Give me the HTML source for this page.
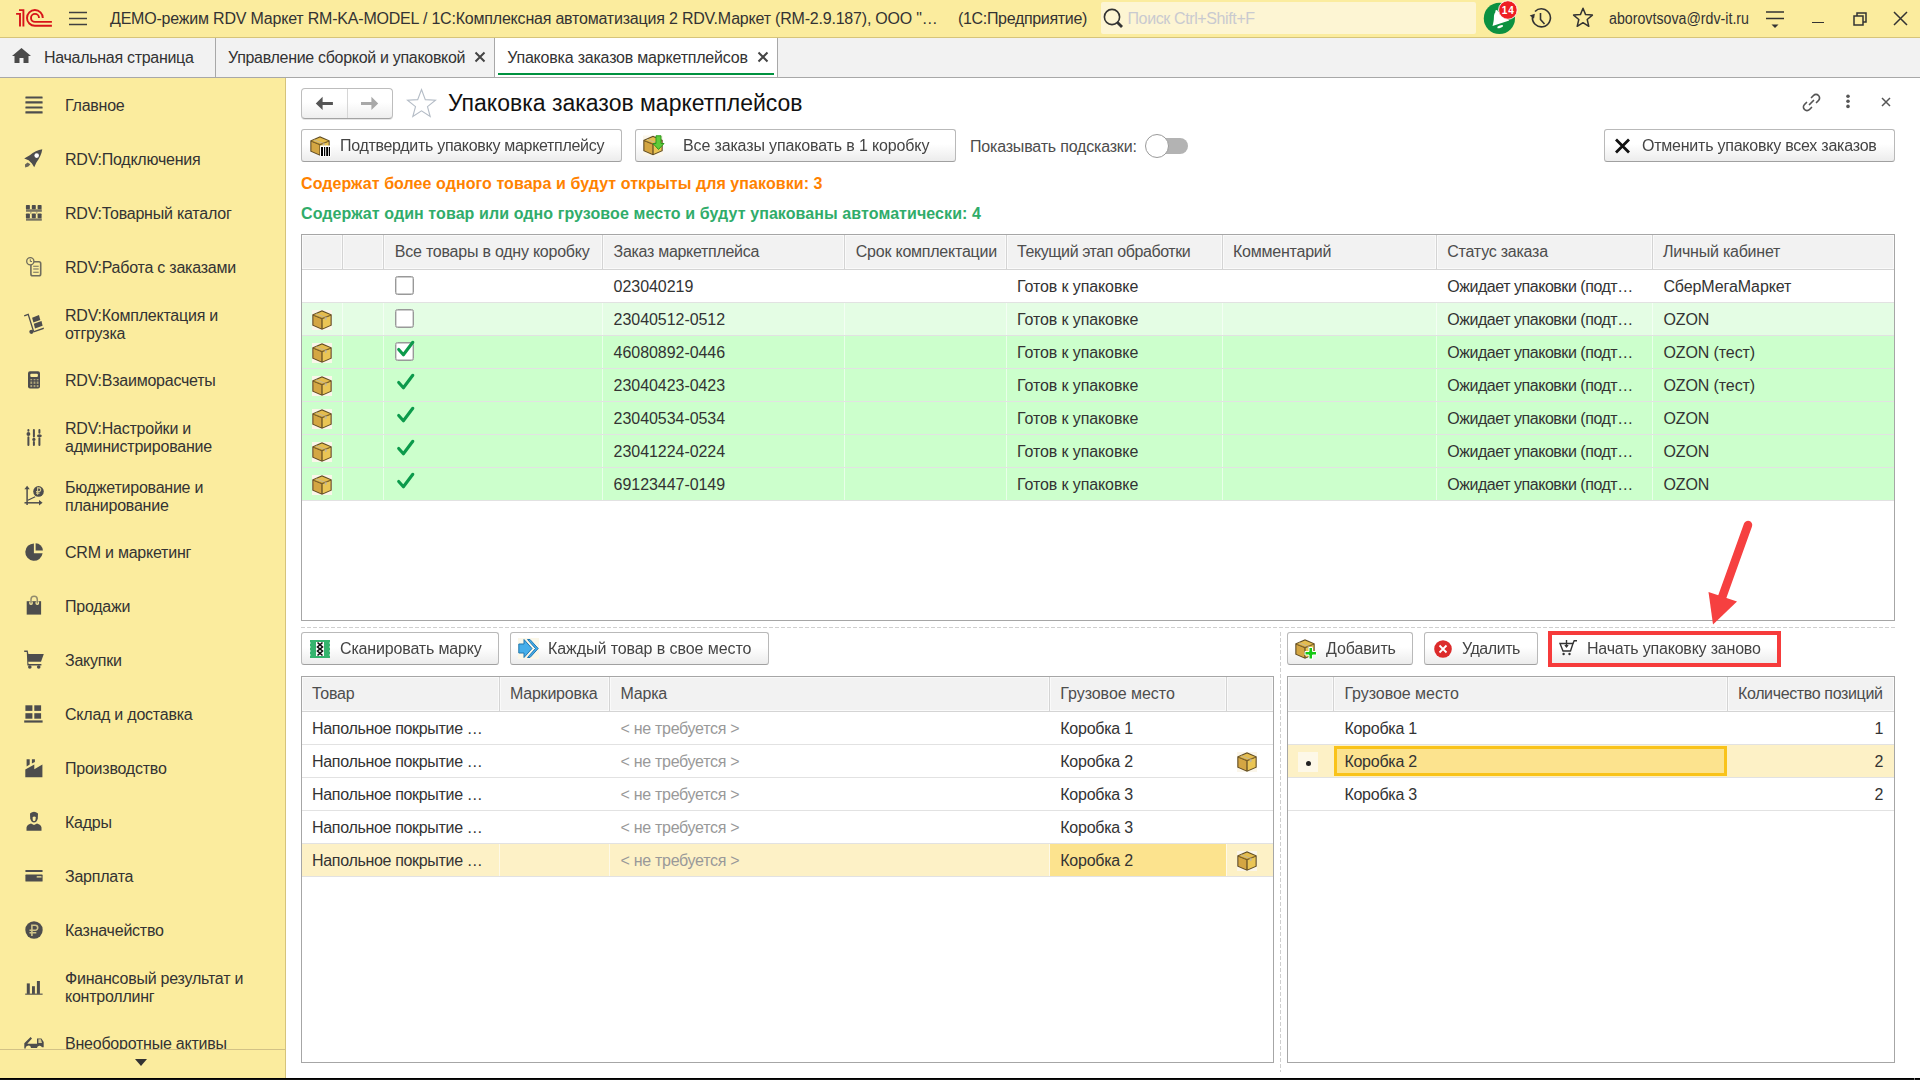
<!DOCTYPE html>
<html><head><meta charset="utf-8"><style>
html,body{margin:0;padding:0;width:1920px;height:1080px;overflow:hidden;background:#fff;}
body{position:relative;font-family:"Liberation Sans",sans-serif;}
.t{position:absolute;white-space:nowrap;line-height:18px;}
.r{position:absolute;}
svg.r{overflow:visible;}
</style></head><body>
<div class="r" style="left:0px;top:0px;width:1920px;height:37px;background:#FBEC9E"></div>
<div class="r" style="left:0px;top:37px;width:1920px;height:1px;background:#D6C47A"></div>
<svg class="r" style="left:12px;top:5px" width="46" height="26" viewBox="0 0 46 26"><g fill="none" stroke="#D7141A" stroke-width="1.9">
<path d="M4.1 8.9 H8 V21.6"/><path d="M7 5.1 H11.4 V21.6"/>
<path d="M30.8 12.9 A7.9 7.9 0 1 0 22.9 20.8 H39.9"/>
<path d="M27 12.9 A4 4 0 1 0 23 16.9 H39.9"/>
</g></svg>
<svg class="r" style="left:69px;top:11px" width="19" height="15" viewBox="0 0 19 15"><g stroke="#404040" stroke-width="1.6"><path d="M0 1.5H18M0 7.5H18M0 13.5H18"/></g></svg>
<div class="t" style="left:110px;top:10px;color:#333;font-size:16px;font-weight:normal;letter-spacing:-0.202px;">ДЕМО-режим RDV Маркет RM-KA-MODEL / 1С:Комплексная автоматизация 2 RDV.Маркет (RM-2.9.187), ООО "…</div>
<div class="t" style="left:958px;top:10px;color:#333;font-size:16px;font-weight:normal;letter-spacing:-0.323px;">(1С:Предприятие)</div>
<div class="r" style="left:1101px;top:2px;width:375px;height:32px;background:#FDF5D3;border-radius:2px"></div>
<svg class="r" style="left:1103px;top:8px" width="22" height="22" viewBox="0 0 22 22"><circle cx="9" cy="9" r="7.6" fill="none" stroke="#333" stroke-width="1.6"/><path d="M14.5 14.5 L19 19" stroke="#333" stroke-width="2.8"/></svg>
<div class="t" style="left:1127.5px;top:10px;color:#C9CAD0;font-size:16px;font-weight:normal;letter-spacing:-0.383px;">Поиск Ctrl+Shift+F</div>
<svg class="r" style="left:1480px;top:0px" width="42" height="36" viewBox="0 0 42 36"><circle cx="19.4" cy="18.4" r="15.6" fill="#0B9141"/>
<path d="M16.3 9.9 C17.4 9.9 18 10.7 18 11.7 C20.6 12.4 22.6 14.2 24.2 16.6 L29.3 20.4 L12.5 25.9 C13.4 23 13.9 20.3 13.9 17.6 C13.9 15 14.5 13 15.5 11.9 C15.1 10.9 15.5 9.9 16.3 9.9 Z" fill="#fff"/>
<ellipse cx="20.2" cy="26.6" rx="3.1" ry="1.25" transform="rotate(-20 20.2 26.6)" fill="#fff"/>
<circle cx="27.9" cy="10" r="9.3" fill="#EE1D23" stroke="#fff" stroke-width="0.9"/>
<text x="28.3" y="13.6" style="font-family:'Liberation Sans',sans-serif;font-weight:bold" font-size="10" letter-spacing="1" fill="#fff" text-anchor="middle">14</text></svg>
<svg class="r" style="left:1529px;top:6px" width="26" height="24" viewBox="0 0 26 24"><g fill="none" stroke="#333" stroke-width="1.6"><path d="M3.5 10.5 A9 9 0 1 0 6 5.5"/><path d="M11.5 7 V13.5 L15.5 18"/></g>
<path d="M1 8.5 L6.5 8.5 L4 13 Z" fill="#333" transform="rotate(-20 4 10)"/></svg>
<svg class="r" style="left:1572px;top:7px" width="22" height="22" viewBox="0 0 22 22"><path d="M11 1.3 L13.6 7.6 L20.4 8.1 L15.2 12.5 L16.8 19.3 L11 15.7 L5.2 19.3 L6.8 12.5 L1.6 8.1 L8.4 7.6 Z" fill="none" stroke="#333" stroke-width="1.5" stroke-linejoin="round"/></svg>
<div class="t" style="left:1609.3px;top:10px;color:#333;font-size:16px;font-weight:normal;letter-spacing:0.000px;transform:scaleX(0.888);transform-origin:0 0;">aborovtsova@rdv-it.ru</div>
<svg class="r" style="left:1765px;top:9px" width="21" height="20" viewBox="0 0 21 20"><g stroke="#333" stroke-width="1.6"><path d="M1 3H19M1 9.5H19"/></g><path d="M6.5 15.5H13.5L10 19Z" fill="#333"/></svg>
<div class="r" style="left:1812px;top:22px;width:12px;height:1.3px;background:#333"></div>
<svg class="r" style="left:1852px;top:11px" width="16" height="16" viewBox="0 0 16 16"><g fill="none" stroke="#333" stroke-width="1.5"><rect x="2" y="5" width="9" height="9"/><path d="M5 5V2H14V11H11"/></g></svg>
<svg class="r" style="left:1892px;top:10px" width="18" height="18" viewBox="0 0 18 18"><path d="M2 2L15 15M15 2L2 15" stroke="#333" stroke-width="1.5"/></svg>
<div class="r" style="left:0px;top:38px;width:1920px;height:39px;background:#F2F2F2"></div>
<div class="r" style="left:0px;top:77px;width:1920px;height:1px;background:#A8A8A8"></div>
<div class="r" style="left:215px;top:38px;width:1px;height:39px;background:#A8A8A8"></div>
<div class="r" style="left:494px;top:38px;width:1px;height:39px;background:#A8A8A8"></div>
<div class="r" style="left:495px;top:38px;width:282px;height:39px;background:#fff"></div>
<div class="r" style="left:777px;top:38px;width:1px;height:39px;background:#A8A8A8"></div>
<div class="r" style="left:498px;top:73px;width:276px;height:2px;background:#00923F"></div>
<svg class="r" style="left:11px;top:47px" width="21" height="17" viewBox="0 0 21 17"><path d="M10.5 1 L20 9 L17.5 9 L17.5 16 L12.5 16 L12.5 11 L8.5 11 L8.5 16 L3.5 16 L3.5 9 L1 9 Z" fill="#4A4A4A"/></svg>
<div class="t" style="left:44px;top:49px;color:#333;font-size:16px;font-weight:normal;letter-spacing:-0.290px;">Начальная страница</div>
<div class="t" style="left:228px;top:49px;color:#333;font-size:16px;font-weight:normal;letter-spacing:-0.305px;">Управление сборкой и упаковкой</div>
<svg class="r" style="left:474px;top:51px" width="12" height="12" viewBox="0 0 12 12"><path d="M1.5 1.5L10.5 10.5M10.5 1.5L1.5 10.5" stroke="#444" stroke-width="2"/></svg>
<div class="t" style="left:507.2px;top:49px;color:#333;font-size:16px;font-weight:normal;letter-spacing:-0.203px;">Упаковка заказов маркетплейсов</div>
<svg class="r" style="left:757px;top:51px" width="12" height="12" viewBox="0 0 12 12"><path d="M1.5 1.5L10.5 10.5M10.5 1.5L1.5 10.5" stroke="#444" stroke-width="2"/></svg>
<div class="r" style="left:0px;top:78px;width:285px;height:1000px;background:#FBEC9E"></div>
<div class="r" style="left:285px;top:78px;width:1px;height:1000px;background:#D5C37C"></div>
<div class="t" style="left:65px;top:97px;color:#333;font-size:16px;font-weight:normal;letter-spacing:-0.230px;">Главное</div>
<div class="t" style="left:65px;top:151px;color:#333;font-size:16px;font-weight:normal;letter-spacing:-0.230px;">RDV:Подключения</div>
<div class="t" style="left:65px;top:205px;color:#333;font-size:16px;font-weight:normal;letter-spacing:-0.230px;">RDV:Товарный каталог</div>
<div class="t" style="left:65px;top:259px;color:#333;font-size:16px;font-weight:normal;letter-spacing:-0.230px;">RDV:Работа с заказами</div>
<div class="t" style="left:65px;top:307px;color:#333;font-size:16px;font-weight:normal;letter-spacing:-0.230px;">RDV:Комплектация и</div>
<div class="t" style="left:65px;top:325px;color:#333;font-size:16px;font-weight:normal;letter-spacing:-0.230px;">отгрузка</div>
<div class="t" style="left:65px;top:372px;color:#333;font-size:16px;font-weight:normal;letter-spacing:-0.230px;">RDV:Взаиморасчеты</div>
<div class="t" style="left:65px;top:420px;color:#333;font-size:16px;font-weight:normal;letter-spacing:-0.230px;">RDV:Настройки и</div>
<div class="t" style="left:65px;top:438px;color:#333;font-size:16px;font-weight:normal;letter-spacing:-0.230px;">администрирование</div>
<div class="t" style="left:65px;top:479px;color:#333;font-size:16px;font-weight:normal;letter-spacing:-0.230px;">Бюджетирование и</div>
<div class="t" style="left:65px;top:497px;color:#333;font-size:16px;font-weight:normal;letter-spacing:-0.230px;">планирование</div>
<div class="t" style="left:65px;top:544px;color:#333;font-size:16px;font-weight:normal;letter-spacing:-0.230px;">CRM и маркетинг</div>
<div class="t" style="left:65px;top:598px;color:#333;font-size:16px;font-weight:normal;letter-spacing:-0.230px;">Продажи</div>
<div class="t" style="left:65px;top:652px;color:#333;font-size:16px;font-weight:normal;letter-spacing:-0.230px;">Закупки</div>
<div class="t" style="left:65px;top:706px;color:#333;font-size:16px;font-weight:normal;letter-spacing:-0.230px;">Склад и доставка</div>
<div class="t" style="left:65px;top:760px;color:#333;font-size:16px;font-weight:normal;letter-spacing:-0.230px;">Производство</div>
<div class="t" style="left:65px;top:814px;color:#333;font-size:16px;font-weight:normal;letter-spacing:-0.230px;">Кадры</div>
<div class="t" style="left:65px;top:868px;color:#333;font-size:16px;font-weight:normal;letter-spacing:-0.230px;">Зарплата</div>
<div class="t" style="left:65px;top:922px;color:#333;font-size:16px;font-weight:normal;letter-spacing:-0.230px;">Казначейство</div>
<div class="t" style="left:65px;top:970px;color:#333;font-size:16px;font-weight:normal;letter-spacing:-0.230px;">Финансовый результат и</div>
<div class="t" style="left:65px;top:988px;color:#333;font-size:16px;font-weight:normal;letter-spacing:-0.230px;">контроллинг</div>
<div class="t" style="left:65px;top:1035px;color:#333;font-size:16px;font-weight:normal;letter-spacing:-0.230px;">Внеоборотные активы</div>
<svg class="r" style="left:0;top:0" width="286" height="1080" viewBox="0 0 286 1080"><g fill="#4D4D4D">
<rect x="25.4" y="96.4" width="17.2" height="2.2" rx="0.5"/><rect x="25.4" y="101.3" width="17.2" height="2.2" rx="0.5"/><rect x="25.4" y="106.4" width="17.2" height="2.2" rx="0.5"/><rect x="25.4" y="111.3" width="17.2" height="2.2" rx="0.5"/>
<path d="M42.3 149.3 C38 150 33.5 152 29.8 155.3 L24.2 158.4 L28.6 160.3 L31.9 163.4 L34.2 167.2 L36.4 162.4 C39.6 158.5 41.6 154 42.3 149.3 Z"/>
<circle cx="36.7" cy="155.6" r="2.3" fill="#fff"/>
<path d="M27.6 162.4 L25 164.6 L25.2 167.4 L28.4 166.6 L30.4 164.3 Z" opacity="0.85"/>
<rect x="25.9" y="205" width="4" height="4.3" rx="0.7"/><rect x="31.8" y="205" width="4" height="4.3" rx="0.7"/><rect x="37.6" y="205" width="4" height="4.3" rx="0.7"/>
<rect x="26" y="209.3" width="15.8" height="2.5" opacity="0.75"/>
<rect x="25.9" y="213.6" width="4" height="4.6" rx="0.7"/><rect x="31.8" y="213.6" width="4" height="4.6" rx="0.7"/><rect x="37.6" y="213.6" width="4" height="4.6" rx="0.7"/>
<rect x="26" y="218.4" width="15.8" height="2.3" opacity="0.75"/>
<rect x="30" y="211.8" width="1.6" height="2" opacity="0.4"/><rect x="35.9" y="211.8" width="1.6" height="2" opacity="0.4"/>
</g>
<g fill="none" stroke="#4D4D4D" opacity="0.8">
<rect x="30.9" y="261.8" width="9.8" height="13.9" rx="1.8" stroke-width="1.6"/>
<circle cx="30.3" cy="261.3" r="3.6" fill="#FBEC9E" stroke-width="1.3"/>
<path d="M30.3 259.3 V261.5 H32" stroke-width="1"/>
<path d="M33.2 266.3 H38.7 M33.2 269 H38.7 M33.2 272.2 H38.7" stroke-width="1.1"/>
</g>
<g fill="#4D4D4D">
<path d="M24.2 315.8 L28.2 314.3 L33.6 331.5" fill="none" stroke="#4D4D4D" stroke-width="1.3"/>
<circle cx="31.4" cy="331.8" r="2.1"/>
<path d="M33.2 331.2 L43.7 327.6 L43.9 329 L33.6 332.5 Z"/>
<path d="M32.1 317.8 L39 315.1 L40.3 320 L33.4 322.5 Z"/>
<path d="M33.8 323.7 L41.5 321 L42.6 325.8 L35 328.4 Z"/>
<rect x="28" y="371.2" width="12" height="17.4" rx="2"/>
</g>
<rect x="30.3" y="373.7" width="7.6" height="3.3" rx="1" fill="#FBEC9E"/>
<g fill="#FBEC9E" opacity="0.55">
<rect x="30.4" y="379" width="1.8" height="1.3"/><rect x="33.6" y="379" width="1.8" height="1.3"/><rect x="36.7" y="379" width="1.8" height="1.3"/>
<rect x="30.4" y="381.5" width="1.8" height="2.4"/><rect x="33.6" y="381.5" width="1.8" height="2.4"/><rect x="36.7" y="381.5" width="1.8" height="2.4"/>
<rect x="30.4" y="385" width="1.8" height="2.1"/><rect x="33.6" y="385" width="1.8" height="2.1"/><rect x="36.7" y="385" width="1.8" height="2.1"/>
</g>
<g stroke="#4D4D4D" stroke-width="2" stroke-linecap="round">
<path d="M28.4 430 V430.8 M28.4 437.2 V445 M33.9 430 V436.5 M33.9 442 V445 M39.4 430 V432.8 M39.4 438.3 V445"/>
</g>
<g fill="#4D4D4D"><circle cx="28.4" cy="434" r="1.9"/><circle cx="33.9" cy="439.4" r="1.6"/><ellipse cx="39.4" cy="435.8" rx="2.4" ry="1.5"/></g>
<g fill="none" stroke="#4D4D4D" stroke-width="1.5"><path d="M27.1 488.5 V505"/><path d="M24.5 502.8 H40"/><path d="M27.8 500.2 L31 498.7 L35.2 496.8" stroke-width="1.1"/></g>
<g fill="#4D4D4D"><path d="M27.1 485.8 L24.4 489.3 H29.8 Z"/><path d="M42.6 502.8 L39 500 V505.6 Z"/><circle cx="38.5" cy="491.4" r="5.3"/></g>
<path d="M37.6 494.8 V487.9 H39.3 A1.9 1.9 0 0 1 39.3 491.6 H36 M36 493.3 H39.5" fill="none" stroke="#FBEC9E" stroke-width="1.1" opacity="0.8"/>
<g fill="#4D4D4D">
<path d="M33.9 553.3 V543.4 A8.7 8.7 0 1 0 42.6 553.3 Z"/>
<path d="M35.6 550.6 V543.2 A7.4 7.4 0 0 1 42.9 550.6 Z"/>
<rect x="26.7" y="601.2" width="14.4" height="13.4"/>
</g>
<circle cx="31" cy="603" r="1.9" fill="#FBEC9E"/><circle cx="37.3" cy="603" r="1.9" fill="#FBEC9E"/>
<path d="M31 603.5 V599.5 Q31 596.3 34.1 596.3 Q37.3 596.3 37.3 599.5 V603.5" fill="none" stroke="#4D4D4D" stroke-width="1.5" opacity="0.6"/>
<g fill="#4D4D4D">
<path d="M24.2 650.5 H27.7 L28.4 654 H43.8 L41 661.8 H28.2 L28.6 664 H41.4 V665.4 H27.4 L26.8 652 H24.2 Z"/>
<circle cx="29.8" cy="667" r="1.8"/><circle cx="38.7" cy="667" r="1.8"/>
<rect x="25.4" y="705.3" width="7" height="5.6"/><rect x="34.3" y="705.3" width="6.8" height="5.6"/>
<rect x="25.4" y="713.2" width="7" height="5.5"/><rect x="34.3" y="713.2" width="6.8" height="5.5"/>
<rect x="24.2" y="720.4" width="18.4" height="2.2"/>
<path d="M26.6 759.3 H29.7 V764.6 L26.6 766.4 Z"/><path d="M31.9 759.3 H34.9 V762.1 L31.9 763.6 Z"/>
<path d="M25.3 777.2 V769.6 L34.3 764.6 V769.3 L42.4 764.6 V777.2 Z"/>
<path d="M30 813.5 Q34 810 38 813.5 L37.8 818.5 Q36.8 822.5 34 822.5 Q31.2 822.5 30.2 818.5 Z"/>
<path d="M26.5 830.8 V827.5 Q27 824.5 31 823.5 L34 825 L37 823.5 Q41 824.5 41.5 827.5 V830.8 Z"/>
</g>
<path d="M32.6 817.3 Q34 815.8 35.8 817.1 L35.4 820.2 Q34 821.9 32.8 820.2 Z" fill="#FBEC9E"/>
<g fill="#4D4D4D">
<rect x="25.4" y="870" width="17.2" height="2.1" rx="0.6"/>
<rect x="25.4" y="874.6" width="17.2" height="7" rx="0.6"/>
</g>
<rect x="36.6" y="876.2" width="5" height="1.2" rx="0.5" fill="#FBEC9E"/>
<circle cx="34" cy="930" r="8.7" fill="#4D4D4D"/>
<path d="M31.9 936 V925.2 H35.2 A2.5 2.5 0 0 1 35.2 930.2 H29.5 M29.5 932.7 H36.3" fill="none" stroke="#FBEC9E" stroke-width="1.6" opacity="0.75"/>
<g fill="#4D4D4D">
<rect x="26.8" y="983.4" width="3" height="10.5"/><rect x="32" y="986.2" width="2.9" height="7.7"/><rect x="36.9" y="981" width="3" height="12.9"/>
<rect x="25.2" y="993.5" width="17.4" height="1.4" opacity="0.8"/>
<path d="M24.3 1048.6 V1043.3 L30.6 1037 L32 1038.6 L27.3 1043.7 H37 V1038.4 H41.4 L43.7 1042 V1047.3 H42 A2.6 2.6 0 0 0 37 1048 H31 A2.6 2.6 0 0 0 25.7 1048.6 Z"/>
</g>
<path d="M38.4 1039.3 H40.9 L42 1043 H38.4 Z" fill="#FBEC9E" opacity="0.8"/>
</svg>
<div class="r" style="left:0px;top:1049px;width:285px;height:1px;background:#D2C286"></div>
<div class="r" style="left:0px;top:1050px;width:285px;height:28px;background:#FBEC9E"></div>
<svg class="r" style="left:135px;top:1059px" width="12" height="8" viewBox="0 0 12 8"><path d="M0 0H12L6 7Z" fill="#333"/></svg>
<div class="r" style="left:0px;top:1078px;width:1920px;height:1px;background:#000"></div>
<div class="r" style="left:0px;top:1079px;width:1920px;height:1px;background:#111"></div>
<div class="r" style="left:1914px;top:1078px;width:1px;height:2px;background:#777"></div>
<div class="r" style="left:301px;top:88px;width:90px;height:29px;border:1px solid #BDBDBD;border-bottom-color:#A3A3A3;border-radius:4px;background:linear-gradient(#FFFFFF 0%,#FFFFFF 45%,#EEEEEE 100%);box-shadow:0 1px 0 rgba(0,0,0,0.10)"></div>
<div class="r" style="left:347px;top:89px;width:1px;height:29px;background:#D6D6D6"></div>
<svg class="r" style="left:315px;top:96px" width="19" height="15" viewBox="0 0 19 15"><path d="M0.8 7.6 L7.6 0.8 V6 H17.9 V9.1 H7.6 V13.9 Z" fill="#555"/></svg>
<svg class="r" style="left:360px;top:96px" width="19" height="15" viewBox="0 0 19 15"><path d="M18.2 7.6 L11.4 0.8 V6 H1 V9.1 H11.4 V13.9 Z" fill="#A8A8A8"/></svg>
<svg class="r" style="left:406px;top:88px" width="31" height="30" viewBox="0 0 31 30"><path d="M15.5 1.5 L19.3 11.6 L29.5 12.2 L21.5 18.6 L24.2 28.5 L15.5 22.8 L6.8 28.5 L9.5 18.6 L1.5 12.2 L11.7 11.6 Z" fill="none" stroke="#B4BCC6" stroke-width="1.1" stroke-linejoin="miter"/></svg>
<div class="t" style="left:448px;top:94px;color:#111;font-size:23px;font-weight:normal;letter-spacing:0.000px;">Упаковка заказов маркетплейсов</div>
<svg class="r" style="left:1800px;top:92px" width="23" height="21" viewBox="0 0 23 21"><g fill="none" stroke="#555" stroke-width="1.7" stroke-linecap="round"><path d="M9.5 12.5 L13.5 8.5"/><path d="M11.5 5.5 L13.5 3.5 A3.5 3.5 0 0 1 18.5 8.5 L16.5 10.5"/><path d="M11.5 15.5 L9.5 17.5 A3.5 3.5 0 0 1 4.5 12.5 L6.5 10.5"/></g></svg>
<svg class="r" style="left:1844px;top:94px" width="8" height="15" viewBox="0 0 8 15"><g fill="#555"><circle cx="4" cy="2.2" r="1.8"/><circle cx="4" cy="7.3" r="1.8"/><circle cx="4" cy="12.4" r="1.8"/></g></svg>
<svg class="r" style="left:1880px;top:96px" width="12" height="12" viewBox="0 0 12 12"><path d="M2 2L10 10M10 2L2 10" stroke="#555" stroke-width="1.5"/></svg>
<div class="r" style="left:301px;top:129px;width:319px;height:31px;border:1px solid #B9B9B9;border-bottom-color:#A0A0A0;border-radius:3px;background:linear-gradient(#FFFFFF 0%,#FFFFFF 45%,#ECECEC 100%)"></div>
<svg class="r" style="left:310px;top:135px" width="22" height="22" viewBox="0 0 22 22"><g transform="translate(0,1)"><rect x="0" y="0" width="20" height="20" fill="none"/>
<path d="M10 0.3 L19.7 4.4 L19.7 15.6 L10 19.8 L0.3 15.6 L0.3 4.4 Z" fill="#5E4A22"/>
<path d="M10 1.5 L18.5 5 L10 8.3 L1.5 5 Z" fill="#E4BC4E"/>
<path d="M1.4 5.8 L9.4 9 L9.4 18.6 L1.4 15 Z" fill="#D4A643"/>
<path d="M10.6 9 L18.6 5.8 L18.6 15 L10.6 18.6 Z" fill="#EAC555"/>
<path d="M4.3 3.4 L13.3 7 L14.6 6.5 L14.6 9.6 L13.2 10.2 L13.1 7.7 L3.7 4 Z" fill="#BDB6A6"/>
<path d="M1.5 5 L10 8.3 L18.5 5" fill="none" stroke="#8C6A2A" stroke-width="0.7"/></g>
<rect x="10" y="10.5" width="11" height="11" fill="#fff"/>
<g fill="#000"><rect x="11" y="12" width="2" height="9"/><rect x="14" y="12" width="1.2" height="9"/><rect x="16.2" y="12" width="2" height="9"/><rect x="19" y="12" width="1" height="9"/></g></svg>
<div class="t" style="left:339.6px;top:137px;color:#444;font-size:16px;font-weight:normal;letter-spacing:-0.303px;will-change:transform;">Подтвердить упаковку маркетплейсу</div>
<div class="r" style="left:635px;top:129px;width:319px;height:31px;border:1px solid #B9B9B9;border-bottom-color:#A0A0A0;border-radius:3px;background:linear-gradient(#FFFFFF 0%,#FFFFFF 45%,#ECECEC 100%)"></div>
<svg class="r" style="left:643px;top:135px" width="22" height="22" viewBox="0 0 22 22"><g transform="translate(0,0.5)"><rect x="0" y="0" width="20" height="20" fill="#FBF6EA"/>
<path d="M10 0.3 L19.7 4.4 L19.7 15.6 L10 19.8 L0.3 15.6 L0.3 4.4 Z" fill="#5E4A22"/>
<path d="M10 1.5 L18.5 5 L10 8.3 L1.5 5 Z" fill="#E4BC4E"/>
<path d="M1.4 5.8 L9.4 9 L9.4 18.6 L1.4 15 Z" fill="#D4A643"/>
<path d="M10.6 9 L18.6 5.8 L18.6 15 L10.6 18.6 Z" fill="#EAC555"/>
<path d="M4.3 3.4 L13.3 7 L14.6 6.5 L14.6 9.6 L13.2 10.2 L13.1 7.7 L3.7 4 Z" fill="#BDB6A6"/>
<path d="M1.5 5 L10 8.3 L18.5 5" fill="none" stroke="#8C6A2A" stroke-width="0.7"/></g>
<path d="M13 0.8 H18 V8.5 H21 L15.5 14.5 L10 8.5 H13 Z" fill="#5FCB3A" stroke="#2E9A1E" stroke-width="1"/></svg>
<div class="t" style="left:683px;top:137px;color:#444;font-size:16px;font-weight:normal;letter-spacing:-0.140px;will-change:transform;">Все заказы упаковать в 1 коробку</div>
<div class="t" style="left:970px;top:138px;color:#4D4D4D;font-size:16px;font-weight:normal;letter-spacing:-0.188px;">Показывать подсказки:</div>
<div class="r" style="left:1147px;top:138px;width:41px;height:16px;background:#B3B3B3;border-radius:8px"></div>
<div class="r" style="left:1145px;top:134px;width:22px;height:22px;background:#fff;border:1px solid #9A9A9A;border-radius:50%"></div>
<div class="r" style="left:1604px;top:129px;width:289px;height:31px;border:1px solid #B9B9B9;border-bottom-color:#A0A0A0;border-radius:3px;background:linear-gradient(#FFFFFF 0%,#FFFFFF 45%,#ECECEC 100%)"></div>
<svg class="r" style="left:1614px;top:138px" width="17" height="16" viewBox="0 0 17 16"><path d="M2 1.5 L15 14.5 M15 1.5 L2 14.5" stroke="#111" stroke-width="2.8"/></svg>
<div class="t" style="left:1642.4px;top:137px;color:#444;font-size:16px;font-weight:normal;letter-spacing:-0.230px;will-change:transform;">Отменить упаковку всех заказов</div>
<div class="t" style="left:301px;top:175px;color:#FF8200;font-size:16px;font-weight:bold;letter-spacing:0.075px;">Содержат более одного товара и будут открыты для упаковки: 3</div>
<div class="t" style="left:301px;top:205px;color:#30AC6A;font-size:16px;font-weight:bold;letter-spacing:0.088px;">Содержат один товар или одно грузовое место и будут упакованы автоматически: 4</div>
<div class="r" style="left:301px;top:234px;width:1594px;height:387px;border:1px solid #A6A6A6;box-sizing:border-box;background:#fff"></div>
<div class="r" style="left:302px;top:235px;width:1592px;height:34px;background:#F2F2F2"></div>
<div class="r" style="left:302px;top:269px;width:1592px;height:1px;background:#D4D4D4"></div>
<div class="r" style="left:302px;top:235px;width:1592px;height:1px;background:#FAFAFA"></div>
<div class="r" style="left:302px;top:268px;width:1592px;height:1px;background:#FAFAFA"></div>
<div class="r" style="left:302px;top:235px;width:1px;height:34px;background:#FAFAFA"></div>
<div class="r" style="left:1893px;top:235px;width:1px;height:34px;background:#FAFAFA"></div>
<div class="r" style="left:341px;top:235px;width:1px;height:34px;background:#FAFAFA"></div>
<div class="r" style="left:342px;top:235px;width:1px;height:34px;background:#D4D4D4"></div>
<div class="r" style="left:343px;top:235px;width:1px;height:34px;background:#FAFAFA"></div>
<div class="r" style="left:382px;top:235px;width:1px;height:34px;background:#FAFAFA"></div>
<div class="r" style="left:383px;top:235px;width:1px;height:34px;background:#D4D4D4"></div>
<div class="r" style="left:384px;top:235px;width:1px;height:34px;background:#FAFAFA"></div>
<div class="r" style="left:601px;top:235px;width:1px;height:34px;background:#FAFAFA"></div>
<div class="r" style="left:602px;top:235px;width:1px;height:34px;background:#D4D4D4"></div>
<div class="r" style="left:603px;top:235px;width:1px;height:34px;background:#FAFAFA"></div>
<div class="r" style="left:843px;top:235px;width:1px;height:34px;background:#FAFAFA"></div>
<div class="r" style="left:844px;top:235px;width:1px;height:34px;background:#D4D4D4"></div>
<div class="r" style="left:845px;top:235px;width:1px;height:34px;background:#FAFAFA"></div>
<div class="r" style="left:1005px;top:235px;width:1px;height:34px;background:#FAFAFA"></div>
<div class="r" style="left:1006px;top:235px;width:1px;height:34px;background:#D4D4D4"></div>
<div class="r" style="left:1007px;top:235px;width:1px;height:34px;background:#FAFAFA"></div>
<div class="r" style="left:1221px;top:235px;width:1px;height:34px;background:#FAFAFA"></div>
<div class="r" style="left:1222px;top:235px;width:1px;height:34px;background:#D4D4D4"></div>
<div class="r" style="left:1223px;top:235px;width:1px;height:34px;background:#FAFAFA"></div>
<div class="r" style="left:1435px;top:235px;width:1px;height:34px;background:#FAFAFA"></div>
<div class="r" style="left:1436px;top:235px;width:1px;height:34px;background:#D4D4D4"></div>
<div class="r" style="left:1437px;top:235px;width:1px;height:34px;background:#FAFAFA"></div>
<div class="r" style="left:1651px;top:235px;width:1px;height:34px;background:#FAFAFA"></div>
<div class="r" style="left:1652px;top:235px;width:1px;height:34px;background:#D4D4D4"></div>
<div class="r" style="left:1653px;top:235px;width:1px;height:34px;background:#FAFAFA"></div>
<div class="t" style="left:394.8px;top:243px;color:#4D4D4D;font-size:16px;font-weight:normal;letter-spacing:-0.230px;">Все товары в одну коробку</div>
<div class="t" style="left:613.6px;top:243px;color:#4D4D4D;font-size:16px;font-weight:normal;letter-spacing:-0.302px;">Заказ маркетплейса</div>
<div class="t" style="left:855.8px;top:243px;color:#4D4D4D;font-size:16px;font-weight:normal;letter-spacing:-0.230px;">Срок комплектации</div>
<div class="t" style="left:1017px;top:243px;color:#4D4D4D;font-size:16px;font-weight:normal;letter-spacing:-0.404px;">Текущий этап обработки</div>
<div class="t" style="left:1233px;top:243px;color:#4D4D4D;font-size:16px;font-weight:normal;letter-spacing:-0.230px;">Комментарий</div>
<div class="t" style="left:1447.3px;top:243px;color:#4D4D4D;font-size:16px;font-weight:normal;letter-spacing:-0.230px;">Статус заказа</div>
<div class="t" style="left:1663px;top:243px;color:#4D4D4D;font-size:16px;font-weight:normal;letter-spacing:-0.230px;">Личный кабинет</div>
<div class="r" style="left:302px;top:270px;width:1592px;height:32px;background:#FFFFFF"></div>
<div class="r" style="left:302px;top:302px;width:1592px;height:1px;background:#E2E2E2"></div>
<div class="r" style="left:395px;top:276px;width:17px;height:17px;border:1px solid #999;border-radius:2.5px;background:#fff;box-shadow:inset 0 0 0 0.4px #999"></div>
<div class="t" style="left:613.6px;top:278px;color:#333;font-size:16px;font-weight:normal;letter-spacing:-0.050px;">023040219</div>
<div class="t" style="left:1017px;top:278px;color:#333;font-size:16px;font-weight:normal;letter-spacing:-0.100px;">Готов к упаковке</div>
<div class="t" style="left:1447.3px;top:278px;color:#333;font-size:16px;font-weight:normal;letter-spacing:-0.468px;">Ожидает упаковки (подт…</div>
<div class="t" style="left:1663.4px;top:278px;color:#333;font-size:16px;font-weight:normal;letter-spacing:-0.100px;">СберМегаМаркет</div>
<div class="r" style="left:302px;top:303px;width:1592px;height:32px;background:#E4FDE4"></div>
<div class="r" style="left:302px;top:335px;width:1592px;height:1px;background:#E2E2E2"></div>
<div class="r" style="left:342px;top:303px;width:1px;height:32px;background:rgba(255,255,255,0.55)"></div>
<div class="r" style="left:383px;top:303px;width:1px;height:32px;background:rgba(255,255,255,0.55)"></div>
<div class="r" style="left:602px;top:303px;width:1px;height:32px;background:rgba(255,255,255,0.55)"></div>
<div class="r" style="left:844px;top:303px;width:1px;height:32px;background:rgba(255,255,255,0.55)"></div>
<div class="r" style="left:1006px;top:303px;width:1px;height:32px;background:rgba(255,255,255,0.55)"></div>
<div class="r" style="left:1222px;top:303px;width:1px;height:32px;background:rgba(255,255,255,0.55)"></div>
<div class="r" style="left:1436px;top:303px;width:1px;height:32px;background:rgba(255,255,255,0.55)"></div>
<div class="r" style="left:1652px;top:303px;width:1px;height:32px;background:rgba(255,255,255,0.55)"></div>
<svg class="r" style="left:312px;top:310px" width="20" height="20" viewBox="0 0 20 20"><rect x="0" y="0" width="20" height="20" fill="#FBF6EA"/>
<path d="M10 0.3 L19.7 4.4 L19.7 15.6 L10 19.8 L0.3 15.6 L0.3 4.4 Z" fill="#5E4A22"/>
<path d="M10 1.5 L18.5 5 L10 8.3 L1.5 5 Z" fill="#E4BC4E"/>
<path d="M1.4 5.8 L9.4 9 L9.4 18.6 L1.4 15 Z" fill="#D4A643"/>
<path d="M10.6 9 L18.6 5.8 L18.6 15 L10.6 18.6 Z" fill="#EAC555"/>
<path d="M4.3 3.4 L13.3 7 L14.6 6.5 L14.6 9.6 L13.2 10.2 L13.1 7.7 L3.7 4 Z" fill="#BDB6A6"/>
<path d="M1.5 5 L10 8.3 L18.5 5" fill="none" stroke="#8C6A2A" stroke-width="0.7"/></svg>
<div class="r" style="left:395px;top:309px;width:17px;height:17px;border:1px solid #999;border-radius:2.5px;background:#fff;box-shadow:inset 0 0 0 0.4px #999"></div>
<div class="t" style="left:613.6px;top:311px;color:#333;font-size:16px;font-weight:normal;letter-spacing:-0.050px;">23040512-0512</div>
<div class="t" style="left:1017px;top:311px;color:#333;font-size:16px;font-weight:normal;letter-spacing:-0.100px;">Готов к упаковке</div>
<div class="t" style="left:1447.3px;top:311px;color:#333;font-size:16px;font-weight:normal;letter-spacing:-0.468px;">Ожидает упаковки (подт…</div>
<div class="t" style="left:1663.4px;top:311px;color:#333;font-size:16px;font-weight:normal;letter-spacing:-0.100px;">OZON</div>
<div class="r" style="left:302px;top:336px;width:1592px;height:32px;background:#CCFFCC"></div>
<div class="r" style="left:302px;top:368px;width:1592px;height:1px;background:#E2E2E2"></div>
<div class="r" style="left:342px;top:336px;width:1px;height:32px;background:rgba(255,255,255,0.55)"></div>
<div class="r" style="left:383px;top:336px;width:1px;height:32px;background:rgba(255,255,255,0.55)"></div>
<div class="r" style="left:602px;top:336px;width:1px;height:32px;background:rgba(255,255,255,0.55)"></div>
<div class="r" style="left:844px;top:336px;width:1px;height:32px;background:rgba(255,255,255,0.55)"></div>
<div class="r" style="left:1006px;top:336px;width:1px;height:32px;background:rgba(255,255,255,0.55)"></div>
<div class="r" style="left:1222px;top:336px;width:1px;height:32px;background:rgba(255,255,255,0.55)"></div>
<div class="r" style="left:1436px;top:336px;width:1px;height:32px;background:rgba(255,255,255,0.55)"></div>
<div class="r" style="left:1652px;top:336px;width:1px;height:32px;background:rgba(255,255,255,0.55)"></div>
<svg class="r" style="left:312px;top:343px" width="20" height="20" viewBox="0 0 20 20"><rect x="0" y="0" width="20" height="20" fill="#FBF6EA"/>
<path d="M10 0.3 L19.7 4.4 L19.7 15.6 L10 19.8 L0.3 15.6 L0.3 4.4 Z" fill="#5E4A22"/>
<path d="M10 1.5 L18.5 5 L10 8.3 L1.5 5 Z" fill="#E4BC4E"/>
<path d="M1.4 5.8 L9.4 9 L9.4 18.6 L1.4 15 Z" fill="#D4A643"/>
<path d="M10.6 9 L18.6 5.8 L18.6 15 L10.6 18.6 Z" fill="#EAC555"/>
<path d="M4.3 3.4 L13.3 7 L14.6 6.5 L14.6 9.6 L13.2 10.2 L13.1 7.7 L3.7 4 Z" fill="#BDB6A6"/>
<path d="M1.5 5 L10 8.3 L18.5 5" fill="none" stroke="#8C6A2A" stroke-width="0.7"/></svg>
<div class="r" style="left:395px;top:342px;width:17px;height:17px;border:1px solid #999;border-radius:2.5px;background:#fff;box-shadow:inset 0 0 0 0.4px #999"></div>
<svg class="r" style="left:390px;top:336px" width="30" height="33" viewBox="0 0 30 33"><path d="M8.7 13.5 L13.4 18.8 L22.8 6.3" fill="none" stroke="#0C9A4B" stroke-width="3.1" stroke-linecap="round" stroke-linejoin="round"/></svg>
<div class="t" style="left:613.6px;top:344px;color:#333;font-size:16px;font-weight:normal;letter-spacing:-0.050px;">46080892-0446</div>
<div class="t" style="left:1017px;top:344px;color:#333;font-size:16px;font-weight:normal;letter-spacing:-0.100px;">Готов к упаковке</div>
<div class="t" style="left:1447.3px;top:344px;color:#333;font-size:16px;font-weight:normal;letter-spacing:-0.468px;">Ожидает упаковки (подт…</div>
<div class="t" style="left:1663.4px;top:344px;color:#333;font-size:16px;font-weight:normal;letter-spacing:-0.100px;">OZON (тест)</div>
<div class="r" style="left:302px;top:369px;width:1592px;height:32px;background:#CCFFCC"></div>
<div class="r" style="left:302px;top:401px;width:1592px;height:1px;background:#E2E2E2"></div>
<div class="r" style="left:342px;top:369px;width:1px;height:32px;background:rgba(255,255,255,0.55)"></div>
<div class="r" style="left:383px;top:369px;width:1px;height:32px;background:rgba(255,255,255,0.55)"></div>
<div class="r" style="left:602px;top:369px;width:1px;height:32px;background:rgba(255,255,255,0.55)"></div>
<div class="r" style="left:844px;top:369px;width:1px;height:32px;background:rgba(255,255,255,0.55)"></div>
<div class="r" style="left:1006px;top:369px;width:1px;height:32px;background:rgba(255,255,255,0.55)"></div>
<div class="r" style="left:1222px;top:369px;width:1px;height:32px;background:rgba(255,255,255,0.55)"></div>
<div class="r" style="left:1436px;top:369px;width:1px;height:32px;background:rgba(255,255,255,0.55)"></div>
<div class="r" style="left:1652px;top:369px;width:1px;height:32px;background:rgba(255,255,255,0.55)"></div>
<svg class="r" style="left:312px;top:376px" width="20" height="20" viewBox="0 0 20 20"><rect x="0" y="0" width="20" height="20" fill="#FBF6EA"/>
<path d="M10 0.3 L19.7 4.4 L19.7 15.6 L10 19.8 L0.3 15.6 L0.3 4.4 Z" fill="#5E4A22"/>
<path d="M10 1.5 L18.5 5 L10 8.3 L1.5 5 Z" fill="#E4BC4E"/>
<path d="M1.4 5.8 L9.4 9 L9.4 18.6 L1.4 15 Z" fill="#D4A643"/>
<path d="M10.6 9 L18.6 5.8 L18.6 15 L10.6 18.6 Z" fill="#EAC555"/>
<path d="M4.3 3.4 L13.3 7 L14.6 6.5 L14.6 9.6 L13.2 10.2 L13.1 7.7 L3.7 4 Z" fill="#BDB6A6"/>
<path d="M1.5 5 L10 8.3 L18.5 5" fill="none" stroke="#8C6A2A" stroke-width="0.7"/></svg>
<svg class="r" style="left:390px;top:369px" width="30" height="33" viewBox="0 0 30 33"><path d="M8.7 13.5 L13.4 18.8 L22.8 6.3" fill="none" stroke="#0C9A4B" stroke-width="3.1" stroke-linecap="round" stroke-linejoin="round"/></svg>
<div class="t" style="left:613.6px;top:377px;color:#333;font-size:16px;font-weight:normal;letter-spacing:-0.050px;">23040423-0423</div>
<div class="t" style="left:1017px;top:377px;color:#333;font-size:16px;font-weight:normal;letter-spacing:-0.100px;">Готов к упаковке</div>
<div class="t" style="left:1447.3px;top:377px;color:#333;font-size:16px;font-weight:normal;letter-spacing:-0.468px;">Ожидает упаковки (подт…</div>
<div class="t" style="left:1663.4px;top:377px;color:#333;font-size:16px;font-weight:normal;letter-spacing:-0.100px;">OZON (тест)</div>
<div class="r" style="left:302px;top:402px;width:1592px;height:32px;background:#CCFFCC"></div>
<div class="r" style="left:302px;top:434px;width:1592px;height:1px;background:#E2E2E2"></div>
<div class="r" style="left:342px;top:402px;width:1px;height:32px;background:rgba(255,255,255,0.55)"></div>
<div class="r" style="left:383px;top:402px;width:1px;height:32px;background:rgba(255,255,255,0.55)"></div>
<div class="r" style="left:602px;top:402px;width:1px;height:32px;background:rgba(255,255,255,0.55)"></div>
<div class="r" style="left:844px;top:402px;width:1px;height:32px;background:rgba(255,255,255,0.55)"></div>
<div class="r" style="left:1006px;top:402px;width:1px;height:32px;background:rgba(255,255,255,0.55)"></div>
<div class="r" style="left:1222px;top:402px;width:1px;height:32px;background:rgba(255,255,255,0.55)"></div>
<div class="r" style="left:1436px;top:402px;width:1px;height:32px;background:rgba(255,255,255,0.55)"></div>
<div class="r" style="left:1652px;top:402px;width:1px;height:32px;background:rgba(255,255,255,0.55)"></div>
<svg class="r" style="left:312px;top:409px" width="20" height="20" viewBox="0 0 20 20"><rect x="0" y="0" width="20" height="20" fill="#FBF6EA"/>
<path d="M10 0.3 L19.7 4.4 L19.7 15.6 L10 19.8 L0.3 15.6 L0.3 4.4 Z" fill="#5E4A22"/>
<path d="M10 1.5 L18.5 5 L10 8.3 L1.5 5 Z" fill="#E4BC4E"/>
<path d="M1.4 5.8 L9.4 9 L9.4 18.6 L1.4 15 Z" fill="#D4A643"/>
<path d="M10.6 9 L18.6 5.8 L18.6 15 L10.6 18.6 Z" fill="#EAC555"/>
<path d="M4.3 3.4 L13.3 7 L14.6 6.5 L14.6 9.6 L13.2 10.2 L13.1 7.7 L3.7 4 Z" fill="#BDB6A6"/>
<path d="M1.5 5 L10 8.3 L18.5 5" fill="none" stroke="#8C6A2A" stroke-width="0.7"/></svg>
<svg class="r" style="left:390px;top:402px" width="30" height="33" viewBox="0 0 30 33"><path d="M8.7 13.5 L13.4 18.8 L22.8 6.3" fill="none" stroke="#0C9A4B" stroke-width="3.1" stroke-linecap="round" stroke-linejoin="round"/></svg>
<div class="t" style="left:613.6px;top:410px;color:#333;font-size:16px;font-weight:normal;letter-spacing:-0.050px;">23040534-0534</div>
<div class="t" style="left:1017px;top:410px;color:#333;font-size:16px;font-weight:normal;letter-spacing:-0.100px;">Готов к упаковке</div>
<div class="t" style="left:1447.3px;top:410px;color:#333;font-size:16px;font-weight:normal;letter-spacing:-0.468px;">Ожидает упаковки (подт…</div>
<div class="t" style="left:1663.4px;top:410px;color:#333;font-size:16px;font-weight:normal;letter-spacing:-0.100px;">OZON</div>
<div class="r" style="left:302px;top:435px;width:1592px;height:32px;background:#CCFFCC"></div>
<div class="r" style="left:302px;top:467px;width:1592px;height:1px;background:#E2E2E2"></div>
<div class="r" style="left:342px;top:435px;width:1px;height:32px;background:rgba(255,255,255,0.55)"></div>
<div class="r" style="left:383px;top:435px;width:1px;height:32px;background:rgba(255,255,255,0.55)"></div>
<div class="r" style="left:602px;top:435px;width:1px;height:32px;background:rgba(255,255,255,0.55)"></div>
<div class="r" style="left:844px;top:435px;width:1px;height:32px;background:rgba(255,255,255,0.55)"></div>
<div class="r" style="left:1006px;top:435px;width:1px;height:32px;background:rgba(255,255,255,0.55)"></div>
<div class="r" style="left:1222px;top:435px;width:1px;height:32px;background:rgba(255,255,255,0.55)"></div>
<div class="r" style="left:1436px;top:435px;width:1px;height:32px;background:rgba(255,255,255,0.55)"></div>
<div class="r" style="left:1652px;top:435px;width:1px;height:32px;background:rgba(255,255,255,0.55)"></div>
<svg class="r" style="left:312px;top:442px" width="20" height="20" viewBox="0 0 20 20"><rect x="0" y="0" width="20" height="20" fill="#FBF6EA"/>
<path d="M10 0.3 L19.7 4.4 L19.7 15.6 L10 19.8 L0.3 15.6 L0.3 4.4 Z" fill="#5E4A22"/>
<path d="M10 1.5 L18.5 5 L10 8.3 L1.5 5 Z" fill="#E4BC4E"/>
<path d="M1.4 5.8 L9.4 9 L9.4 18.6 L1.4 15 Z" fill="#D4A643"/>
<path d="M10.6 9 L18.6 5.8 L18.6 15 L10.6 18.6 Z" fill="#EAC555"/>
<path d="M4.3 3.4 L13.3 7 L14.6 6.5 L14.6 9.6 L13.2 10.2 L13.1 7.7 L3.7 4 Z" fill="#BDB6A6"/>
<path d="M1.5 5 L10 8.3 L18.5 5" fill="none" stroke="#8C6A2A" stroke-width="0.7"/></svg>
<svg class="r" style="left:390px;top:435px" width="30" height="33" viewBox="0 0 30 33"><path d="M8.7 13.5 L13.4 18.8 L22.8 6.3" fill="none" stroke="#0C9A4B" stroke-width="3.1" stroke-linecap="round" stroke-linejoin="round"/></svg>
<div class="t" style="left:613.6px;top:443px;color:#333;font-size:16px;font-weight:normal;letter-spacing:-0.050px;">23041224-0224</div>
<div class="t" style="left:1017px;top:443px;color:#333;font-size:16px;font-weight:normal;letter-spacing:-0.100px;">Готов к упаковке</div>
<div class="t" style="left:1447.3px;top:443px;color:#333;font-size:16px;font-weight:normal;letter-spacing:-0.468px;">Ожидает упаковки (подт…</div>
<div class="t" style="left:1663.4px;top:443px;color:#333;font-size:16px;font-weight:normal;letter-spacing:-0.100px;">OZON</div>
<div class="r" style="left:302px;top:468px;width:1592px;height:32px;background:#CCFFCC"></div>
<div class="r" style="left:302px;top:500px;width:1592px;height:1px;background:#E2E2E2"></div>
<div class="r" style="left:342px;top:468px;width:1px;height:32px;background:rgba(255,255,255,0.55)"></div>
<div class="r" style="left:383px;top:468px;width:1px;height:32px;background:rgba(255,255,255,0.55)"></div>
<div class="r" style="left:602px;top:468px;width:1px;height:32px;background:rgba(255,255,255,0.55)"></div>
<div class="r" style="left:844px;top:468px;width:1px;height:32px;background:rgba(255,255,255,0.55)"></div>
<div class="r" style="left:1006px;top:468px;width:1px;height:32px;background:rgba(255,255,255,0.55)"></div>
<div class="r" style="left:1222px;top:468px;width:1px;height:32px;background:rgba(255,255,255,0.55)"></div>
<div class="r" style="left:1436px;top:468px;width:1px;height:32px;background:rgba(255,255,255,0.55)"></div>
<div class="r" style="left:1652px;top:468px;width:1px;height:32px;background:rgba(255,255,255,0.55)"></div>
<svg class="r" style="left:312px;top:475px" width="20" height="20" viewBox="0 0 20 20"><rect x="0" y="0" width="20" height="20" fill="#FBF6EA"/>
<path d="M10 0.3 L19.7 4.4 L19.7 15.6 L10 19.8 L0.3 15.6 L0.3 4.4 Z" fill="#5E4A22"/>
<path d="M10 1.5 L18.5 5 L10 8.3 L1.5 5 Z" fill="#E4BC4E"/>
<path d="M1.4 5.8 L9.4 9 L9.4 18.6 L1.4 15 Z" fill="#D4A643"/>
<path d="M10.6 9 L18.6 5.8 L18.6 15 L10.6 18.6 Z" fill="#EAC555"/>
<path d="M4.3 3.4 L13.3 7 L14.6 6.5 L14.6 9.6 L13.2 10.2 L13.1 7.7 L3.7 4 Z" fill="#BDB6A6"/>
<path d="M1.5 5 L10 8.3 L18.5 5" fill="none" stroke="#8C6A2A" stroke-width="0.7"/></svg>
<svg class="r" style="left:390px;top:468px" width="30" height="33" viewBox="0 0 30 33"><path d="M8.7 13.5 L13.4 18.8 L22.8 6.3" fill="none" stroke="#0C9A4B" stroke-width="3.1" stroke-linecap="round" stroke-linejoin="round"/></svg>
<div class="t" style="left:613.6px;top:476px;color:#333;font-size:16px;font-weight:normal;letter-spacing:-0.050px;">69123447-0149</div>
<div class="t" style="left:1017px;top:476px;color:#333;font-size:16px;font-weight:normal;letter-spacing:-0.100px;">Готов к упаковке</div>
<div class="t" style="left:1447.3px;top:476px;color:#333;font-size:16px;font-weight:normal;letter-spacing:-0.468px;">Ожидает упаковки (подт…</div>
<div class="t" style="left:1663.4px;top:476px;color:#333;font-size:16px;font-weight:normal;letter-spacing:-0.100px;">OZON</div>
<div class="r" style="left:301px;top:627px;width:1594px;height:1px;background:repeating-linear-gradient(90deg,#CFCFCF 0 4px,transparent 4px 6px)"></div>
<div class="r" style="left:1280px;top:632px;width:1px;height:440px;background:repeating-linear-gradient(180deg,#CFCFCF 0 4px,transparent 4px 6px)"></div>
<div class="r" style="left:301px;top:632px;width:196px;height:31px;border:1px solid #B9B9B9;border-bottom-color:#A0A0A0;border-radius:3px;background:linear-gradient(#FFFFFF 0%,#FFFFFF 45%,#ECECEC 100%)"></div>
<svg class="r" style="left:310px;top:640px" width="20" height="18" viewBox="0 0 20 18"><rect x="0" y="0" width="20" height="18" fill="#35B46E"/>
<g fill="#fff" opacity="0.5"><circle cx="0" cy="3" r="1"/><circle cx="0" cy="7" r="1"/><circle cx="0" cy="11" r="1"/><circle cx="0" cy="15" r="1"/><circle cx="20" cy="3" r="1"/><circle cx="20" cy="7" r="1"/><circle cx="20" cy="11" r="1"/><circle cx="20" cy="15" r="1"/></g>
<rect x="6" y="2" width="8" height="14" fill="#fff"/>
<path d="M7.5 2.5 L12.5 7 L7.5 11 L12.5 15.5 M12.5 2.5 L7.5 7 L12.5 11 L7.5 15.5" stroke="#111" stroke-width="1.6" fill="none"/></svg>
<div class="t" style="left:340px;top:640px;color:#444;font-size:16px;font-weight:normal;letter-spacing:-0.159px;will-change:transform;">Сканировать марку</div>
<div class="r" style="left:510px;top:632px;width:257px;height:31px;border:1px solid #B9B9B9;border-bottom-color:#A0A0A0;border-radius:3px;background:linear-gradient(#FFFFFF 0%,#FFFFFF 45%,#ECECEC 100%)"></div>
<svg class="r" style="left:518px;top:638px" width="21" height="21" viewBox="0 0 21 21"><rect x="0" y="0" width="21" height="21" fill="#FBF7E8"/>
<path d="M0.8 6 H6 V1.5 L14 10.5 L6 19.5 V15 H0.8 Z" fill="#45AEEA" stroke="#2178B0" stroke-width="1"/>
<path d="M9.5 1.5 L12 1.5 L20.2 10.5 L12 19.5 L9.5 19.5 L17.5 10.5 Z" fill="#45AEEA" stroke="#2178B0" stroke-width="1"/></svg>
<div class="t" style="left:548px;top:640px;color:#444;font-size:16px;font-weight:normal;letter-spacing:-0.073px;will-change:transform;">Каждый товар в свое место</div>
<div class="r" style="left:1287px;top:632px;width:124px;height:31px;border:1px solid #B9B9B9;border-bottom-color:#A0A0A0;border-radius:3px;background:linear-gradient(#FFFFFF 0%,#FFFFFF 45%,#ECECEC 100%)"></div>
<svg class="r" style="left:1295px;top:638px" width="22" height="22" viewBox="0 0 22 22"><g transform="translate(0,1)"><rect x="0" y="0" width="20" height="20" fill="none"/>
<path d="M10 0.3 L19.7 4.4 L19.7 15.6 L10 19.8 L0.3 15.6 L0.3 4.4 Z" fill="#5E4A22"/>
<path d="M10 1.5 L18.5 5 L10 8.3 L1.5 5 Z" fill="#E4BC4E"/>
<path d="M1.4 5.8 L9.4 9 L9.4 18.6 L1.4 15 Z" fill="#D4A643"/>
<path d="M10.6 9 L18.6 5.8 L18.6 15 L10.6 18.6 Z" fill="#EAC555"/>
<path d="M4.3 3.4 L13.3 7 L14.6 6.5 L14.6 9.6 L13.2 10.2 L13.1 7.7 L3.7 4 Z" fill="#BDB6A6"/>
<path d="M1.5 5 L10 8.3 L18.5 5" fill="none" stroke="#8C6A2A" stroke-width="0.7"/></g>
<path d="M14 9.5 H17.5 V13.5 H21.5 V17 H17.5 V21 H14 V17 H10 V13.5 H14 Z" fill="#16C916" stroke="#fff" stroke-width="1"/></svg>
<div class="t" style="left:1325.6px;top:640px;color:#444;font-size:16px;font-weight:normal;letter-spacing:-0.109px;will-change:transform;">Добавить</div>
<div class="r" style="left:1424px;top:632px;width:112px;height:31px;border:1px solid #B9B9B9;border-bottom-color:#A0A0A0;border-radius:3px;background:linear-gradient(#FFFFFF 0%,#FFFFFF 45%,#ECECEC 100%)"></div>
<svg class="r" style="left:1434px;top:640px" width="18" height="18" viewBox="0 0 18 18"><circle cx="9" cy="9" r="8.8" fill="#DC2B2B"/><path d="M5.5 5.5L12.5 12.5M12.5 5.5L5.5 12.5" stroke="#fff" stroke-width="1.8"/></svg>
<div class="t" style="left:1462px;top:640px;color:#444;font-size:16px;font-weight:normal;letter-spacing:-0.454px;will-change:transform;">Удалить</div>
<div class="r" style="left:1550px;top:632px;width:227px;height:31px;border:1px solid #B9B9B9;border-bottom-color:#A0A0A0;border-radius:3px;background:linear-gradient(#FFFFFF 0%,#FFFFFF 45%,#ECECEC 100%)"></div>
<svg class="r" style="left:1559px;top:640px" width="20" height="18" viewBox="0 0 20 18"><g fill="none" stroke="#333" stroke-width="1.4"><path d="M1 3.5 H14 L11.5 11 H4 Z"/><path d="M14 3.5 L15.2 0.8 H18"/><path d="M7.5 0 V7"/></g>
<path d="M5.3 5 L7.5 8 L9.7 5 Z" fill="#333"/><circle cx="4.6" cy="14" r="1.2" fill="#333"/><circle cx="10.5" cy="14" r="1.2" fill="#333"/></svg>
<div class="t" style="left:1587.4px;top:640px;color:#444;font-size:16px;font-weight:normal;letter-spacing:-0.200px;will-change:transform;">Начать упаковку заново</div>
<div class="r" style="left:1548px;top:631px;width:233px;height:36px;border:4px solid #F63B3B;box-sizing:border-box"></div>
<div class="r" style="left:301px;top:676px;width:973px;height:387px;border:1px solid #A6A6A6;box-sizing:border-box;background:#fff"></div>
<div class="r" style="left:302px;top:677px;width:971px;height:34px;background:#F2F2F2"></div>
<div class="r" style="left:302px;top:711px;width:971px;height:1px;background:#D4D4D4"></div>
<div class="r" style="left:302px;top:677px;width:971px;height:1px;background:#FAFAFA"></div>
<div class="r" style="left:302px;top:710px;width:971px;height:1px;background:#FAFAFA"></div>
<div class="r" style="left:302px;top:677px;width:1px;height:34px;background:#FAFAFA"></div>
<div class="r" style="left:1272px;top:677px;width:1px;height:34px;background:#FAFAFA"></div>
<div class="r" style="left:498px;top:677px;width:1px;height:34px;background:#FAFAFA"></div>
<div class="r" style="left:499px;top:677px;width:1px;height:34px;background:#D4D4D4"></div>
<div class="r" style="left:500px;top:677px;width:1px;height:34px;background:#FAFAFA"></div>
<div class="r" style="left:608px;top:677px;width:1px;height:34px;background:#FAFAFA"></div>
<div class="r" style="left:609px;top:677px;width:1px;height:34px;background:#D4D4D4"></div>
<div class="r" style="left:610px;top:677px;width:1px;height:34px;background:#FAFAFA"></div>
<div class="r" style="left:1048px;top:677px;width:1px;height:34px;background:#FAFAFA"></div>
<div class="r" style="left:1049px;top:677px;width:1px;height:34px;background:#D4D4D4"></div>
<div class="r" style="left:1050px;top:677px;width:1px;height:34px;background:#FAFAFA"></div>
<div class="r" style="left:1225px;top:677px;width:1px;height:34px;background:#FAFAFA"></div>
<div class="r" style="left:1226px;top:677px;width:1px;height:34px;background:#D4D4D4"></div>
<div class="r" style="left:1227px;top:677px;width:1px;height:34px;background:#FAFAFA"></div>
<div class="t" style="left:312px;top:685px;color:#4D4D4D;font-size:16px;font-weight:normal;letter-spacing:-0.230px;">Товар</div>
<div class="t" style="left:510px;top:685px;color:#4D4D4D;font-size:16px;font-weight:normal;letter-spacing:-0.230px;">Маркировка</div>
<div class="t" style="left:620.6px;top:685px;color:#4D4D4D;font-size:16px;font-weight:normal;letter-spacing:-0.230px;">Марка</div>
<div class="t" style="left:1060.3px;top:685px;color:#4D4D4D;font-size:16px;font-weight:normal;letter-spacing:-0.043px;">Грузовое место</div>
<div class="r" style="left:302px;top:744px;width:971px;height:1px;background:#E2E2E2"></div>
<div class="t" style="left:312px;top:720px;color:#333;font-size:16px;font-weight:normal;letter-spacing:-0.322px;">Напольное покрытие …</div>
<div class="t" style="left:620.5px;top:720px;color:#999999;font-size:16px;font-weight:normal;letter-spacing:-0.295px;">&lt; не требуется &gt;</div>
<div class="t" style="left:1060.3px;top:720px;color:#333;font-size:16px;font-weight:normal;letter-spacing:-0.243px;">Коробка 1</div>
<div class="r" style="left:302px;top:777px;width:971px;height:1px;background:#E2E2E2"></div>
<div class="t" style="left:312px;top:753px;color:#333;font-size:16px;font-weight:normal;letter-spacing:-0.322px;">Напольное покрытие …</div>
<div class="t" style="left:620.5px;top:753px;color:#999999;font-size:16px;font-weight:normal;letter-spacing:-0.295px;">&lt; не требуется &gt;</div>
<div class="t" style="left:1060.3px;top:753px;color:#333;font-size:16px;font-weight:normal;letter-spacing:-0.243px;">Коробка 2</div>
<svg class="r" style="left:1237px;top:752px" width="20" height="20" viewBox="0 0 20 20"><rect x="0" y="0" width="20" height="20" fill="#FBF6EA"/>
<path d="M10 0.3 L19.7 4.4 L19.7 15.6 L10 19.8 L0.3 15.6 L0.3 4.4 Z" fill="#5E4A22"/>
<path d="M10 1.5 L18.5 5 L10 8.3 L1.5 5 Z" fill="#E4BC4E"/>
<path d="M1.4 5.8 L9.4 9 L9.4 18.6 L1.4 15 Z" fill="#D4A643"/>
<path d="M10.6 9 L18.6 5.8 L18.6 15 L10.6 18.6 Z" fill="#EAC555"/>
<path d="M4.3 3.4 L13.3 7 L14.6 6.5 L14.6 9.6 L13.2 10.2 L13.1 7.7 L3.7 4 Z" fill="#BDB6A6"/>
<path d="M1.5 5 L10 8.3 L18.5 5" fill="none" stroke="#8C6A2A" stroke-width="0.7"/></svg>
<div class="r" style="left:302px;top:810px;width:971px;height:1px;background:#E2E2E2"></div>
<div class="t" style="left:312px;top:786px;color:#333;font-size:16px;font-weight:normal;letter-spacing:-0.322px;">Напольное покрытие …</div>
<div class="t" style="left:620.5px;top:786px;color:#999999;font-size:16px;font-weight:normal;letter-spacing:-0.295px;">&lt; не требуется &gt;</div>
<div class="t" style="left:1060.3px;top:786px;color:#333;font-size:16px;font-weight:normal;letter-spacing:-0.243px;">Коробка 3</div>
<div class="r" style="left:302px;top:843px;width:971px;height:1px;background:#E2E2E2"></div>
<div class="t" style="left:312px;top:819px;color:#333;font-size:16px;font-weight:normal;letter-spacing:-0.322px;">Напольное покрытие …</div>
<div class="t" style="left:620.5px;top:819px;color:#999999;font-size:16px;font-weight:normal;letter-spacing:-0.295px;">&lt; не требуется &gt;</div>
<div class="t" style="left:1060.3px;top:819px;color:#333;font-size:16px;font-weight:normal;letter-spacing:-0.243px;">Коробка 3</div>
<div class="r" style="left:302px;top:844px;width:971px;height:32px;background:#FDF1C6"></div>
<div class="r" style="left:1050px;top:844px;width:176px;height:32px;background:#FCE38E"></div>
<div class="r" style="left:499px;top:844px;width:1px;height:32px;background:rgba(255,255,255,0.6)"></div>
<div class="r" style="left:609px;top:844px;width:1px;height:32px;background:rgba(255,255,255,0.6)"></div>
<div class="r" style="left:1049px;top:844px;width:1px;height:32px;background:rgba(255,255,255,0.6)"></div>
<div class="r" style="left:1226px;top:844px;width:1px;height:32px;background:rgba(255,255,255,0.6)"></div>
<div class="r" style="left:302px;top:876px;width:971px;height:1px;background:#E2E2E2"></div>
<div class="t" style="left:312px;top:852px;color:#333;font-size:16px;font-weight:normal;letter-spacing:-0.322px;">Напольное покрытие …</div>
<div class="t" style="left:620.5px;top:852px;color:#999999;font-size:16px;font-weight:normal;letter-spacing:-0.295px;">&lt; не требуется &gt;</div>
<div class="t" style="left:1060.3px;top:852px;color:#333;font-size:16px;font-weight:normal;letter-spacing:-0.243px;">Коробка 2</div>
<svg class="r" style="left:1237px;top:851px" width="20" height="20" viewBox="0 0 20 20"><rect x="0" y="0" width="20" height="20" fill="#FBF6EA"/>
<path d="M10 0.3 L19.7 4.4 L19.7 15.6 L10 19.8 L0.3 15.6 L0.3 4.4 Z" fill="#5E4A22"/>
<path d="M10 1.5 L18.5 5 L10 8.3 L1.5 5 Z" fill="#E4BC4E"/>
<path d="M1.4 5.8 L9.4 9 L9.4 18.6 L1.4 15 Z" fill="#D4A643"/>
<path d="M10.6 9 L18.6 5.8 L18.6 15 L10.6 18.6 Z" fill="#EAC555"/>
<path d="M4.3 3.4 L13.3 7 L14.6 6.5 L14.6 9.6 L13.2 10.2 L13.1 7.7 L3.7 4 Z" fill="#BDB6A6"/>
<path d="M1.5 5 L10 8.3 L18.5 5" fill="none" stroke="#8C6A2A" stroke-width="0.7"/></svg>
<div class="r" style="left:1287px;top:676px;width:608px;height:387px;border:1px solid #A6A6A6;box-sizing:border-box;background:#fff"></div>
<div class="r" style="left:1288px;top:677px;width:606px;height:34px;background:#F2F2F2"></div>
<div class="r" style="left:1288px;top:711px;width:606px;height:1px;background:#D4D4D4"></div>
<div class="r" style="left:1288px;top:677px;width:606px;height:1px;background:#FAFAFA"></div>
<div class="r" style="left:1288px;top:710px;width:606px;height:1px;background:#FAFAFA"></div>
<div class="r" style="left:1288px;top:677px;width:1px;height:34px;background:#FAFAFA"></div>
<div class="r" style="left:1893px;top:677px;width:1px;height:34px;background:#FAFAFA"></div>
<div class="r" style="left:1332px;top:677px;width:1px;height:34px;background:#FAFAFA"></div>
<div class="r" style="left:1333px;top:677px;width:1px;height:34px;background:#D4D4D4"></div>
<div class="r" style="left:1334px;top:677px;width:1px;height:34px;background:#FAFAFA"></div>
<div class="r" style="left:1726px;top:677px;width:1px;height:34px;background:#FAFAFA"></div>
<div class="r" style="left:1727px;top:677px;width:1px;height:34px;background:#D4D4D4"></div>
<div class="r" style="left:1728px;top:677px;width:1px;height:34px;background:#FAFAFA"></div>
<div class="t" style="left:1344.4px;top:685px;color:#4D4D4D;font-size:16px;font-weight:normal;letter-spacing:-0.043px;">Грузовое место</div>
<div class="t" style="left:1738px;top:685px;color:#4D4D4D;font-size:16px;font-weight:normal;letter-spacing:-0.363px;">Количество позиций</div>
<div class="r" style="left:1288px;top:744px;width:606px;height:1px;background:#E2E2E2"></div>
<div class="t" style="left:1344.4px;top:720px;color:#333;font-size:16px;font-weight:normal;letter-spacing:-0.243px;">Коробка 1</div>
<div class="t" style="left:1874.5px;top:720px;color:#333;font-size:16px;font-weight:normal;letter-spacing:0.000px;">1</div>
<div class="r" style="left:1288px;top:745px;width:606px;height:32px;background:#FDF1C6"></div>
<div class="r" style="left:1298px;top:752px;width:20px;height:20px;background:#FDF8E8"></div>
<div class="r" style="left:1305.5px;top:760.5px;width:5px;height:5px;background:#222;border-radius:50%"></div>
<div class="r" style="left:1334px;top:746px;width:393px;height:30px;background:#FCE38E;border:3px solid #F9C31A;box-sizing:border-box"></div>
<div class="r" style="left:1288px;top:777px;width:606px;height:1px;background:#E2E2E2"></div>
<div class="t" style="left:1344.4px;top:753px;color:#333;font-size:16px;font-weight:normal;letter-spacing:-0.243px;">Коробка 2</div>
<div class="t" style="left:1874.5px;top:753px;color:#333;font-size:16px;font-weight:normal;letter-spacing:0.000px;">2</div>
<div class="r" style="left:1288px;top:810px;width:606px;height:1px;background:#E2E2E2"></div>
<div class="t" style="left:1344.4px;top:786px;color:#333;font-size:16px;font-weight:normal;letter-spacing:-0.243px;">Коробка 3</div>
<div class="t" style="left:1874.5px;top:786px;color:#333;font-size:16px;font-weight:normal;letter-spacing:0.000px;">2</div>
<svg class="r" style="left:1700px;top:515px" width="60" height="115" viewBox="0 0 60 115"><path d="M48 10 L20 88" stroke="#F64040" stroke-width="8.5" stroke-linecap="round"/><path d="M8.5 77 L13 109.5 L37 86.5 Z" fill="#F64040"/></svg>
</body></html>
